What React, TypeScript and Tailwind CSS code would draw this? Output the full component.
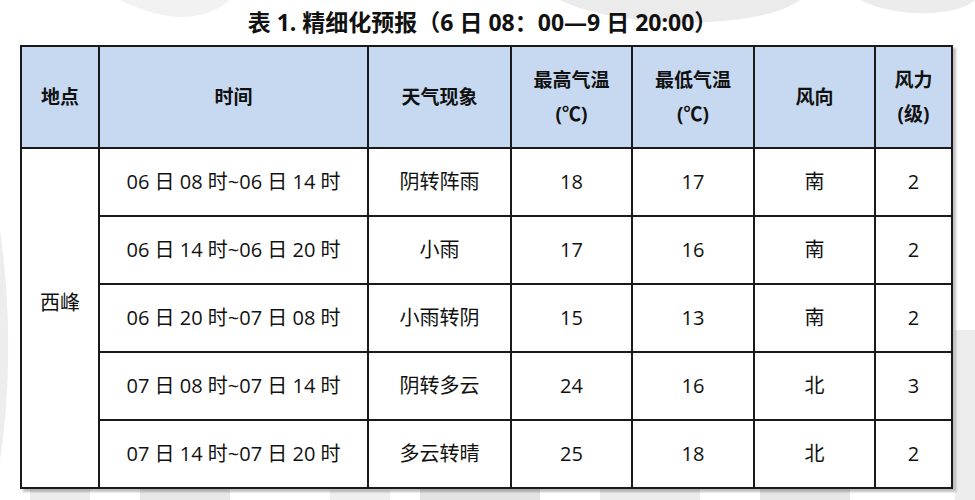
import React from "react";

const rows = [
  ["06 日 08 时~06 日 14 时", "阴转阵雨", "18", "17", "南", "2"],
  ["06 日 14 时~06 日 20 时", "小雨", "17", "16", "南", "2"],
  ["06 日 20 时~07 日 08 时", "小雨转阴", "15", "13", "南", "2"],
  ["07 日 08 时~07 日 14 时", "阴转多云", "24", "16", "北", "3"],
  ["07 日 14 时~07 日 20 时", "多云转晴", "25", "18", "北", "2"],
];

export default function App() {
  return (
    <div
      className="relative w-[975px] h-[500px] overflow-hidden bg-white text-[#111]"
      style={{ fontFamily: '"Open Sans", "Noto Sans CJK SC", sans-serif' }}
    >
      <svg className="absolute inset-0 pointer-events-none" width="975" height="500">
        <path d="M560 0 C620 30 760 30 800 0 Z" fill="#e6e6e6" opacity="0.8" />
        <path d="M860 0 C900 20 960 15 975 0 Z" fill="#ececec" />
        <path d="M120 0 C160 20 200 25 230 0 Z" fill="#f2f2f2" />
        <path d="M0 230 C10 300 12 380 0 460 Z" fill="#ededed" />
        <rect x="30" y="488" width="60" height="12" fill="#ececec" />
        <rect x="140" y="488" width="90" height="12" fill="#e8e8e8" />
        <rect x="330" y="490" width="60" height="10" fill="#efefef" />
        <rect x="420" y="488" width="120" height="12" fill="#e4e4e4" />
        <rect x="600" y="488" width="100" height="12" fill="#ececec" />
        <rect x="760" y="488" width="90" height="12" fill="#e6e6e6" />
        <rect x="955" y="330" width="20" height="170" fill="#ededed" />
      </svg>
      <div className="relative flex flex-col items-center">
        <div className="h-[45px] pt-[6px] text-[23px] font-bold leading-[32px] pr-[10px]">
          表 1. 精细化预报（6 日 08：00—9 日 20:00）
        </div>
        <div className="self-start ml-[20px] shadow-[3px_3px_2px_rgba(0,0,0,0.25)]">
          <table className="border-collapse border-2 border-[#1a1a1a] text-center">
            <colgroup>
              <col className="w-[78px]" />
              <col className="w-[269px]" />
              <col className="w-[143px]" />
              <col className="w-[121px]" />
              <col className="w-[122px]" />
              <col className="w-[121px]" />
              <col className="w-[77px]" />
            </colgroup>
            <thead>
              <tr className="h-[102px] bg-[#c6d9f0] text-[19px] font-bold leading-[34px]">
                <th className="border-2 border-[#1a1a1a]">地点</th>
                <th className="border-2 border-[#1a1a1a]">时间</th>
                <th className="border-2 border-[#1a1a1a]">天气现象</th>
                <th className="border-2 border-[#1a1a1a]">
                  最高气温
                  <br />
                  (℃)
                </th>
                <th className="border-2 border-[#1a1a1a]">
                  最低气温
                  <br />
                  (℃)
                </th>
                <th className="border-2 border-[#1a1a1a]">风向</th>
                <th className="border-2 border-[#1a1a1a]">
                  风力
                  <br />
                  (级)
                </th>
              </tr>
            </thead>
            <tbody className="text-[20px] font-normal">
              {rows.map((r, i) => (
                <tr key={i} className="h-[68px]">
                  {i === 0 && (
                    <td rowSpan={5} className="border-2 border-[#1a1a1a] pb-[30px]">
                      西峰
                    </td>
                  )}
                  {r.map((c, j) => (
                    <td key={j} className="border-2 border-[#1a1a1a]">
                      {c}
                    </td>
                  ))}
                </tr>
              ))}
            </tbody>
          </table>
        </div>
      </div>
    </div>
  );
}
